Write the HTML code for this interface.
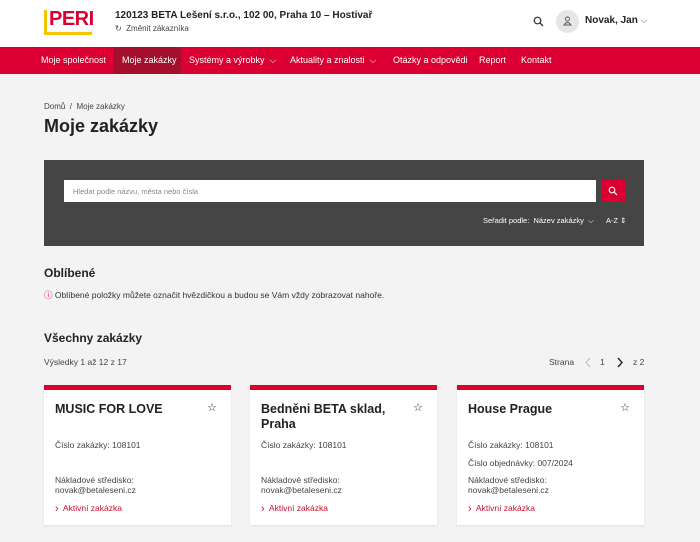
<!DOCTYPE html>
<html><head><meta charset="utf-8"><style>
*{margin:0;padding:0;box-sizing:border-box}
body{width:700px;height:542px;overflow:hidden;background:#f3f3f3;font-family:"Liberation Sans",sans-serif;color:#222;position:relative}
.a{position:absolute}
.hdr{left:0;top:0;width:700px;height:47px;background:#fff}
.nav{left:0;top:47px;width:700px;height:27px;background:#dc0032;color:#fff;font-size:9px}
.nav span{position:absolute;top:0;line-height:27px}
.card{background:#fff;border-top:5px solid #dc0032;width:187px;height:140px;top:385px;box-shadow:0 1px 2px rgba(0,0,0,.08)}
.card h3{position:absolute;left:11px;top:12px;font-size:12.5px;font-weight:bold;line-height:15px;color:#222}
.card .s{position:absolute;right:14px;top:11px;font-size:11px}
.card p{position:absolute;left:11px;font-size:8.5px;color:#444;line-height:10px}
.card .l{color:#c8102e}
.card .l b{font-weight:normal;font-size:11px;position:relative;top:1px}
</style></head><body>
<div class="a hdr"></div>
<div class="a" style="left:44px;top:10px;width:48px;height:25px">
 <div class="a" style="left:0;top:0;width:3px;height:25px;background:#f5c400"></div>
 <div class="a" style="left:0;top:22px;width:48px;height:3px;background:#f5c400"></div>
 <div class="a" style="left:5px;top:-2px;font-size:20px;font-weight:bold;color:#dc0032;letter-spacing:-.5px">PERI</div>
</div>
<div class="a" style="left:115px;top:10px;font-size:10px;font-weight:bold">120123 BETA Lešení s.r.o., 102 00, Praha 10 – Hostivař</div>
<div class="a" style="left:115px;top:24px;font-size:8px;color:#444">↻&nbsp; Změnit zákazníka</div>
<svg class="a" style="left:533px;top:16px" width="11" height="11" viewBox="0 0 11 11"><circle cx="4.5" cy="4.5" r="3.3" fill="none" stroke="#333" stroke-width="1.2"/><path d="M7 7l3 3" stroke="#333" stroke-width="1.3"/></svg>
<div class="a" style="left:556px;top:10px;width:23px;height:23px;border-radius:50%;background:#e6e6e6"></div>
<svg class="a" style="left:563px;top:16px" width="9" height="10" viewBox="0 0 9 10"><circle cx="4.5" cy="3" r="2" fill="none" stroke="#555" stroke-width=".9"/><path d="M1 9q3.5-5 7 0z" fill="none" stroke="#555" stroke-width=".9"/></svg>
<div class="a" style="left:585px;top:15px;font-size:10px;font-weight:bold">Novak, Jan <span style="font-weight:normal;color:#666;font-size:9px">⌵</span></div>
<div class="a nav">
 <span style="left:41px">Moje společnost</span>
 <span style="left:114px;width:67px;height:27px;background:#a50f2d;padding-left:8px">Moje zakázky</span>
 <span style="left:189px">Systémy a výrobky &nbsp;⌵</span>
 <span style="left:290px">Aktuality a znalosti &nbsp;⌵</span>
 <span style="left:393px">Otázky a odpovědi</span>
 <span style="left:479px">Report</span>
 <span style="left:521px">Kontakt</span>
</div>
<div class="a" style="left:44px;top:102px;font-size:8px;color:#444">Domů &nbsp;/&nbsp; Moje zakázky</div>
<div class="a" style="left:44px;top:116px;font-size:18px;font-weight:bold">Moje zakázky</div>
<div class="a" style="left:44px;top:160px;width:600px;height:86px;background:#454545"></div>
<div class="a" style="left:64px;top:180px;width:532px;height:22px;background:#fff;font-size:7.5px;color:#888;padding:7px 9px">Hledat podle názvu, města nebo čísla</div>
<div class="a" style="left:601px;top:180px;width:24px;height:22px;background:#dc0032"></div>
<svg class="a" style="left:608px;top:186px" width="10" height="10" viewBox="0 0 10 10"><circle cx="4" cy="4" r="2.8" fill="none" stroke="#fff" stroke-width="1.1"/><path d="M6 6l3 3" stroke="#fff" stroke-width="1.2"/></svg>
<div class="a" style="left:483px;top:216px;font-size:7.5px;color:#fff">Seřadit podle: &nbsp;Název zakázky &nbsp;⌵</div>
<div class="a" style="left:606px;top:216px;font-size:7.5px;color:#fff">A-Z ⇕</div>
<div class="a" style="left:44px;top:266px;font-size:12px;font-weight:bold">Oblíbené</div>
<div class="a" style="left:44px;top:289px;font-size:8.5px;color:#333"><span style="color:#dc0032">ⓘ</span> Oblíbené položky můžete označit hvězdičkou a budou se Vám vždy zobrazovat nahoře.</div>
<div class="a" style="left:44px;top:331px;font-size:12px;font-weight:bold">Všechny zakázky</div>
<div class="a" style="left:44px;top:357px;font-size:8.5px;color:#444">Výsledky 1 až 12 z 17</div>
<div class="a" style="left:549px;top:357px;font-size:8.5px;color:#444">Strana</div>
<svg class="a" style="left:584px;top:357px" width="8" height="11" viewBox="0 0 8 11"><path d="M6 1L2 5.5 6 10" fill="none" stroke="#bbb" stroke-width="1"/></svg>
<div class="a" style="left:600px;top:357px;font-size:8.5px;color:#444">1</div>
<svg class="a" style="left:616px;top:357px" width="8" height="11" viewBox="0 0 8 11"><path d="M2 1l4 4.5L2 10" fill="none" stroke="#222" stroke-width="1.4"/></svg>
<div class="a" style="left:633px;top:357px;font-size:8.5px;color:#444">z 2</div>

<div class="a card" style="left:44px"><h3>MUSIC FOR LOVE</h3><span class="s">☆</span>
<p style="top:50px">Číslo zakázky: 108101</p><p style="top:85px">Nákladové středisko:<br>novak@betaleseni.cz</p><p class="l" style="top:113px"><b>›</b>&nbsp; Aktivní zakázka</p></div>
<div class="a card" style="left:250px"><h3>Bedněni BETA sklad,<br>Praha</h3><span class="s">☆</span>
<p style="top:50px">Číslo zakázky: 108101</p><p style="top:85px">Nákladové středisko:<br>novak@betaleseni.cz</p><p class="l" style="top:113px"><b>›</b>&nbsp; Aktivní zakázka</p></div>
<div class="a card" style="left:457px"><h3>House Prague</h3><span class="s">☆</span>
<p style="top:50px">Číslo zakázky: 108101</p><p style="top:68px">Číslo objednávky: 007/2024</p><p style="top:85px">Nákladové středisko:<br>novak@betaleseni.cz</p><p class="l" style="top:113px"><b>›</b>&nbsp; Aktivní zakázka</p></div>
</body></html>
